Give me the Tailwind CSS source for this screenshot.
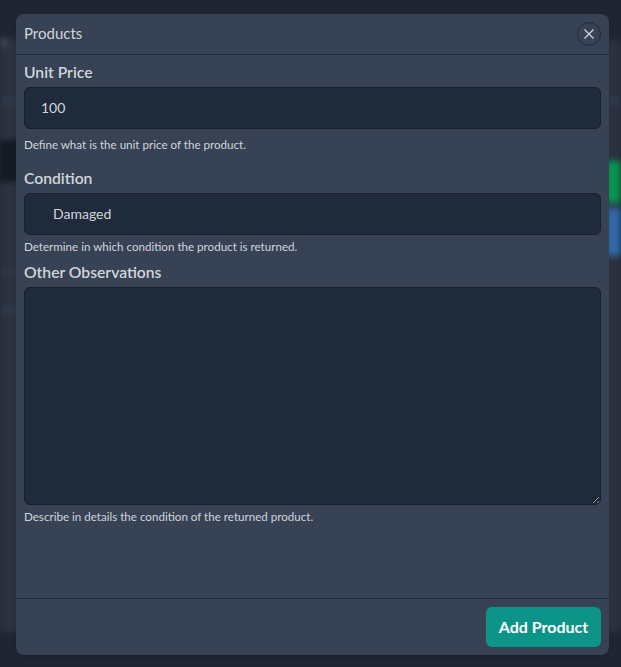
<!DOCTYPE html>
<html lang="en">
<head>
    <meta charset="utf-8"/>
    <title>Products</title>
    <script src="https://cdn.jsdelivr.net/npm/@tailwindcss/browser@4"></script>
</head>
<body class="relative w-[621px] h-[667px] overflow-hidden bg-[#1f2533] font-['Lato',sans-serif]">
    <!-- blurred page behind the modal -->
    <div class="absolute inset-0 blur-[3px]">
        <div class="absolute left-0 top-[40px] w-full h-[592px] bg-[#2c323f]"></div>
        <div class="absolute left-0 top-[98px] w-full h-[6px] bg-[#2f3c52]"></div>
        <div class="absolute left-0 top-[270px] w-[40px] h-[4px] bg-[#2f3a4c]"></div>
        <div class="absolute left-0 top-[307px] w-[40px] h-[6px] bg-[#2f3c52]"></div>
        <div class="absolute left-0 top-[140px] w-[40px] h-[42px] bg-[#141924]"></div>
        <div class="absolute left-0 top-[38px] w-[8px] h-[8px] rounded-full bg-[#4a505c]"></div>
        <div class="absolute right-0 top-[161px] w-[40px] h-[42px] bg-[#059650]"></div>
        <div class="absolute right-0 top-[208px] w-[40px] h-[48px] bg-[#2f69a8]"></div>
    </div>

    <div class="relative w-[593px] h-[641px] ml-[16px] top-[14px] flex flex-col rounded-lg bg-[#374254] shadow-sm">
        <div class="flex items-center justify-between h-[41px] px-2 border-b border-[#1e293b]">
            <h3 class="mb-[2px] text-[15px] text-gray-300">Products</h3>
            <button class="flex items-center justify-center w-6 h-6 rounded-full border border-[#1e293b] text-gray-300">
                <svg class="w-4 h-4" viewBox="0 0 16 16" fill="none" stroke="currentColor" stroke-width="1.3"><path d="M3.5 3.5l9 9M12.5 3.5l-9 9"/></svg>
            </button>
        </div>

        <div class="flex flex-col flex-1 px-2">
            <label class="mt-[6px] text-[15.7px] leading-[22px] font-semibold text-gray-300">Unit Price</label>
            <div class="flex items-center h-[42px] mt-[4px] pl-[16px] rounded-md border border-[#172031] bg-[#1f2a3a] text-sm text-gray-300">100</div>
            <p class="mt-[8px] text-[11.6px] leading-4 text-gray-300">Define what is the unit price of the product.</p>

            <label class="mt-[14px] text-[15.7px] leading-[22px] font-semibold text-gray-300">Condition</label>
            <div class="flex items-center h-[42px] mt-[4px] pl-[28px] rounded-md border border-[#172031] bg-[#1f2a3a] text-sm text-gray-300">Damaged</div>
            <p class="mt-[4px] text-[11.6px] leading-4 text-gray-300">Determine in which condition the product is returned.</p>

            <label class="mt-[6px] text-[15.7px] leading-[22px] font-semibold text-gray-300">Other Observations</label>
            <textarea class="block h-[218px] mt-[4px] rounded-md border border-[#172031] bg-[#1f2a3a]"></textarea>
            <p class="mt-[4px] text-[11.6px] leading-4 text-gray-300">Describe in details the condition of the returned product.</p>
        </div>

        <div class="flex justify-end h-[57px] pt-2 px-2 border-t border-[#1e293b]">
            <button class="w-[115px] h-[40px] rounded-md bg-[#0d9488] text-[16px] font-bold text-white">Add Product</button>
        </div>
    </div>
</body>
</html>
